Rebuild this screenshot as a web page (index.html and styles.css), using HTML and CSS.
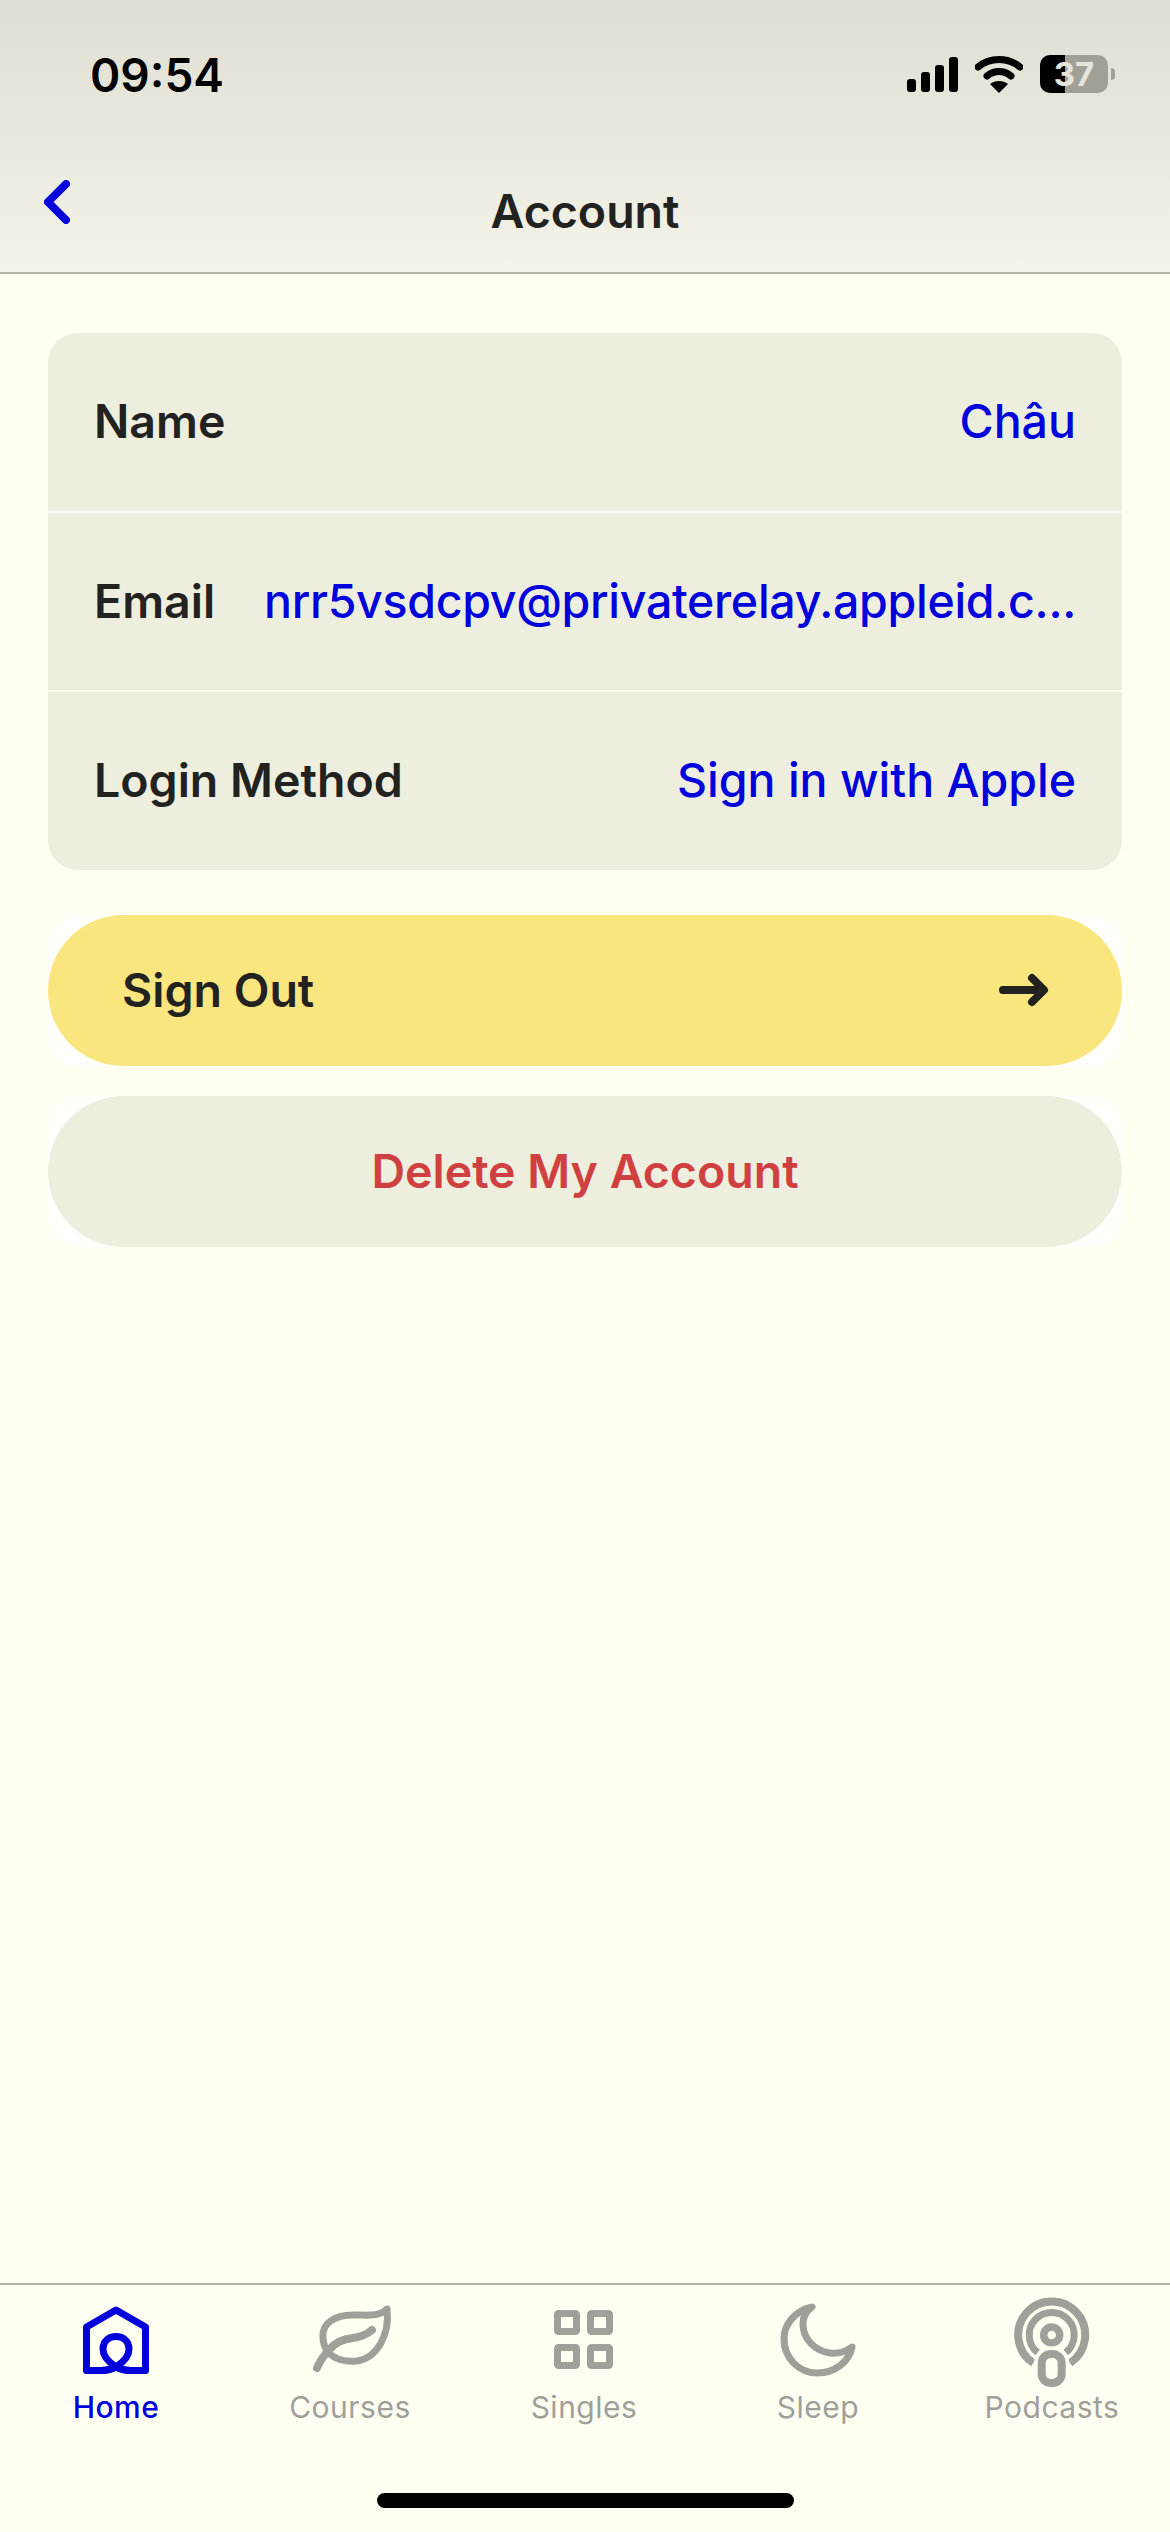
FILE: index.html
```html
<!DOCTYPE html>
<html lang="en">
<head>
    <meta charset="UTF-8">
    <meta name="viewport" content="width=device-width, initial-scale=1.0">
    <title>Account</title>
    <link rel="stylesheet" href="styles.css">
</head>
<body>
    <div class="tela">
        <div class="topo">
            <div class="status">
                <span class="hora">09:54</span>
                <div class="status-icones">
                    <svg class="sinal" width="51" height="35" viewBox="0 0 51 35">
                        <rect x="0" y="22" width="9" height="13" rx="3"/>
                        <rect x="14" y="15" width="9" height="20" rx="3"/>
                        <rect x="28" y="8" width="9" height="27" rx="3"/>
                        <rect x="42" y="0" width="9" height="35" rx="3"/>
                    </svg>
                    <svg class="wifi" width="48" height="37" viewBox="0 0 48 37">
                        <path d="M3 11 C15 1 33 1 45 11" fill="none" stroke="#000" stroke-width="7" stroke-linecap="round"/>
                        <path d="M12 20 C19 14 29 14 36 20" fill="none" stroke="#000" stroke-width="7" stroke-linecap="round"/>
                        <path d="M24 37 L15 28 C20 24 28 24 33 28 Z"/>
                    </svg>
                    <div class="bateria">
                        <div class="bateria-carga"></div>
                        <span class="bateria-texto">37</span>
                    </div>
                    <div class="bateria-ponta"></div>
                </div>
            </div>
            <div class="navbar">
                <a class="voltar">
                    <svg width="26" height="44" viewBox="0 0 26 44">
                        <path d="M22 4 L4 22 L22 40" fill="none" stroke="#0000dc" stroke-width="8" stroke-linecap="round" stroke-linejoin="round"/>
                    </svg>
                </a>
                <h1 class="titulo">Account</h1>
            </div>
        </div>

        <div class="conteudo">
            <div class="cartao">
                <div class="linha">
                    <span class="rotulo">Name</span>
                    <span class="valor">Châu</span>
                </div>
                <div class="linha">
                    <span class="rotulo">Email</span>
                    <span class="valor valor-email">nrr5vsdcpv@privaterelay.appleid.c...</span>
                </div>
                <div class="linha">
                    <span class="rotulo">Login Method</span>
                    <span class="valor">Sign in with Apple</span>
                </div>
            </div>

            <div class="botao-fundo">
                <a class="botao botao-sair">
                    <span>Sign Out</span>
                    <svg width="50" height="34" viewBox="0 0 50 34">
                        <path d="M4 17 H44 M33 5 L45 17 L33 29" fill="none" stroke="#222220" stroke-width="8" stroke-linecap="round" stroke-linejoin="round"/>
                    </svg>
                </a>
            </div>
            <div class="botao-fundo">
                <a class="botao botao-apagar">Delete My Account</a>
            </div>
        </div>

        <div class="abas">
            <a class="aba aba-ativa">
                <svg width="90" height="90" viewBox="0 0 90 90">
                    <path d="M45 15 L74.5 32 V75.5 H60 C54 75.5 49 74 45 72 C41 74 36 75.5 30 75.5 H15.5 V32 Z" fill="none" stroke="#0000dc" stroke-width="7" stroke-linejoin="round"/>
                    <path d="M45 72 C36 66 32 59 32 54 C32 46 38 41.5 45 41.5 C52 41.5 58 46 58 54 C58 59 54 66 45 72 Z" fill="none" stroke="#0000dc" stroke-width="7" stroke-linejoin="round"/>
                </svg>
                <span>Home</span>
            </a>
            <a class="aba">
                <svg width="90" height="90" viewBox="0 0 90 90">
                    <path d="M82 14 C74 22 62 20 48 20 C30 20 17 28 18 42 C18 48 20 53 23 57 C30 65 42 67 52 66 C72 63 85 40 82 14 Z" fill="none" stroke="#a0a09a" stroke-width="7" stroke-linejoin="round"/>
                    <path d="M12 73 C15 66 19 60 24 55 C30 47 38 44 48 43 C55 42 61 40 67 35" fill="none" stroke="#a0a09a" stroke-width="8" stroke-linecap="round"/>
                </svg>
                <span>Courses</span>
            </a>
            <a class="aba">
                <svg width="90" height="90" viewBox="0 0 90 90">
                    <rect x="18.5" y="18.5" width="19" height="18" rx="1" fill="none" stroke="#a0a09a" stroke-width="7"/>
                    <rect x="51.5" y="18.5" width="19" height="18" rx="1" fill="none" stroke="#a0a09a" stroke-width="7"/>
                    <rect x="18.5" y="52.5" width="19" height="18" rx="1" fill="none" stroke="#a0a09a" stroke-width="7"/>
                    <rect x="51.5" y="52.5" width="19" height="18" rx="1" fill="none" stroke="#a0a09a" stroke-width="7"/>
                </svg>
                <span>Singles</span>
            </a>
            <a class="aba">
                <svg width="90" height="90" viewBox="0 0 90 90">
                    <path d="M39 12 C22 16 11 29 11 44 C11 63 26 78 44 78 C62 78 76 67 79 52 C72 57 64 59 57 58 C42 56 30 44 30 29 C30 22 33 16 39 12 Z" fill="none" stroke="#a0a09a" stroke-width="7" stroke-linejoin="round"/>
                </svg>
                <span>Sleep</span>
            </a>
            <a class="aba">
                <svg width="90" height="90" viewBox="0 0 90 90">
                    <path d="M26.3 68 A33.5 33.5 0 1 1 63.1 68" fill="none" stroke="#a0a09a" stroke-width="8"/>
                    <path d="M30.7 57.6 A22.5 22.5 0 1 1 58.7 57.6" fill="none" stroke="#a0a09a" stroke-width="7"/>
                    <circle cx="44.7" cy="40" r="8" fill="none" stroke="#a0a09a" stroke-width="7.5"/>
                    <rect x="34.7" y="59" width="20" height="29" rx="9" fill="none" stroke="#fffff2" stroke-width="15"/>
                    <rect x="34.7" y="59" width="20" height="29" rx="9" fill="#fffff2" stroke="#a0a09a" stroke-width="8"/>
                </svg>
                <span>Podcasts</span>
            </a>
        </div>
        <div class="indicador"></div>
    </div>
</body>
</html>
```

FILE: styles.css
```css
*{
    box-sizing: border-box;
    font-family: Inter, "Liberation Sans", sans-serif;
}
body{
    margin: 0;
    background-color: #fffff2;
}
.tela{
    display: flex;
    flex-direction: column;
    width: 1170px;
    height: 2532px;
    overflow: hidden;
}

/* topo */
.topo{
    height: 274px;
    background: linear-gradient(#deded3, #f3f3e8);
    border-bottom: 2px solid #b4b4a8;
}
.status{
    display: flex;
    align-items: center;
    justify-content: space-between;
    height: 54px;
    margin-top: 47px;
    padding: 0 55px 0 90px;
}
.hora{
    padding-top: 2px;
    font-size: 46px;
    font-weight: 600;
    color: #000;
}
.status-icones{
    display: flex;
    align-items: center;
}
.sinal{
    margin-right: 17px;
}
.wifi{
    margin-right: 17px;
}
.bateria{
    position: relative;
    width: 68px;
    height: 38px;
    background-color: #a0a096;
    border-radius: 10px;
    overflow: hidden;
}
.bateria-carga{
    width: 25px;
    height: 38px;
    background-color: #000;
}
.bateria-texto{
    position: absolute;
    top: 0;
    left: 0;
    width: 68px;
    line-height: 38px;
    text-align: center;
    font-size: 33px;
    font-weight: 700;
    color: #e4e4dc;
}
.bateria-ponta{
    width: 4px;
    height: 12px;
    margin-left: 3px;
    background-color: #a0a096;
    border-radius: 0 4px 4px 0;
}
.navbar{
    position: relative;
    display: flex;
    justify-content: center;
    padding-top: 82px;
}
.titulo{
    margin: 0;
    font-size: 46.5px;
    line-height: 56px;
    font-weight: 600;
    color: #222220;
}
.voltar{
    position: absolute;
    top: 79px;
    left: 44px;
}

/* conteudo */
.conteudo{
    flex-grow: 1;
    padding: 59px 48px 0;
}
.cartao{
    background-color: #eeeedf;
    border-radius: 30px;
}
.linha{
    display: flex;
    align-items: center;
    justify-content: space-between;
    height: 179px;
    padding: 0 46px 2px;
    border-top: 2px solid #fafaf0;
    font-size: 46.5px;
}
.linha:first-child{
    height: 178px;
    border-top: none;
}
.linha:last-child{
    height: 180px;
}
.rotulo{
    font-weight: 600;
    color: #222220;
    white-space: nowrap;
}
.valor{
    font-weight: 500;
    color: #0000dc;
    white-space: nowrap;
}
.valor-email{
    letter-spacing: -0.3px;
}
.botao-fundo{
    margin-top: 30px;
    background-color: #fffffc;
    border-radius: 30px;
}
.cartao + .botao-fundo{
    margin-top: 45px;
}
.botao{
    display: flex;
    align-items: center;
    height: 151px;
    padding-bottom: 2px;
    border-radius: 76px;
    font-size: 46.5px;
    font-weight: 600;
}
.botao-sair{
    justify-content: space-between;
    padding-left: 74px;
    padding-right: 73px;
    background-color: #fae67e;
    color: #222220;
}
.botao-apagar{
    justify-content: center;
    background-color: #eeeedf;
    color: #d04040;
}

/* abas */
.abas{
    display: flex;
    height: 210px;
    border-top: 2px solid #b4b4a8;
}
.aba{
    display: flex;
    flex-direction: column;
    align-items: center;
    width: 234px;
    padding-top: 10px;
    font-size: 30px;
    font-weight: 400;
    line-height: 40px;
    letter-spacing: 0.5px;
    color: #a0a09a;
}
.aba:first-child{
    margin-left: -1px;
}
.aba svg{
    display: block;
    margin-bottom: 2px;
    overflow: visible;
}
.aba-ativa{
    font-weight: 500;
    color: #0000dc;
}
.indicador{
    flex-shrink: 0;
    width: 417px;
    height: 15px;
    margin: 0 auto 24px;
    background-color: #000;
    border-radius: 8px;
}
```
